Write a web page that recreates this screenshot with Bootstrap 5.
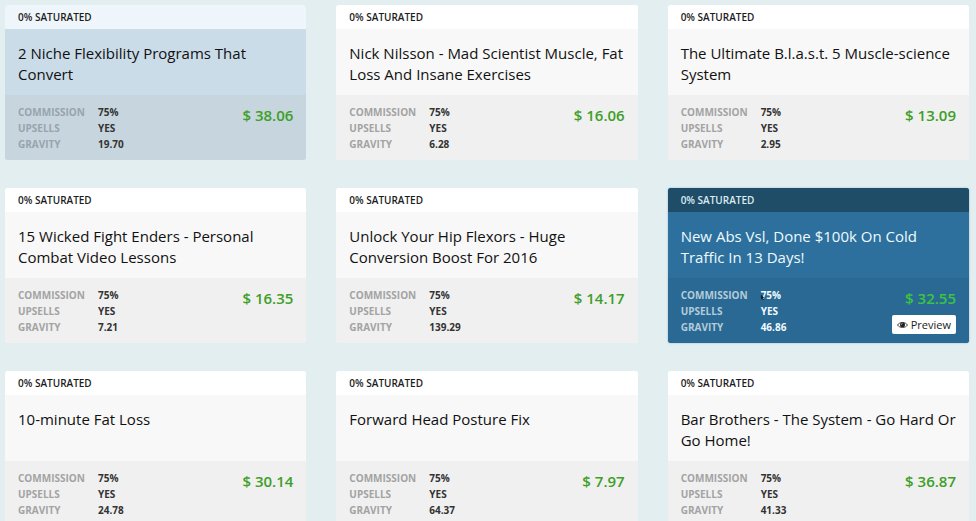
<!DOCTYPE html>
<html lang="en">
<head>
<meta charset="utf-8">
<meta name="viewport" content="width=device-width, initial-scale=1">
<title>Offers</title>
<link href="https://cdn.jsdelivr.net/npm/bootstrap@5.3.0/dist/css/bootstrap.min.css" rel="stylesheet">
<style>
html { scrollbar-width: none; }
body { background: #e2eef0; font-family: "Open Sans", sans-serif; color: #1c1c1c; }
.offers { padding: 5px 7px 5px 5px; --bs-gutter-x: 0; }
.offer-grid { display: grid; grid-template-columns: repeat(3, minmax(0, 1fr)); column-gap: 30px; row-gap: 28px; }
.offer { border: 0; border-radius: 3px; background: #f8f8f8; overflow: hidden; color: inherit; }
.offer .card-header { background: #fff; border: 0; padding: 5px 13px 4px; font-size: 10px; line-height: 15px; font-weight: 600; border-radius: 0; }
.offer .card-body { padding: 14px 6px 10px 13px; min-height: 66px; }
.offer .card-title { font-size: 15px; line-height: 21px; font-weight: 400; margin: 0; color: #111; }
.offer .card-footer { background: #f0f0f0; border: 0; padding: 9px 13px 8px; min-height: 65px; border-radius: 0; }
.stats { display: grid; grid-template-columns: 80px auto; font-size: 10px; line-height: 16px; font-weight: 700; }
.stats dt { color: #a3a3a3; font-weight: 700; }
.stats dd { margin: 0; color: #333; }
.price { font-size: 15px; line-height: 23px; font-weight: 600; color: #3d9f27; }
.offer-viewed { background: #cbdce9; }
.offer-viewed .card-header { background: #eff6fb; }
.offer-viewed .card-footer { background: #c7d5df; }
.offer-viewed .stats dt { color: #98a4ad; }
.offer-active { background: #2d709d; color: #eefaff; box-shadow: 0 0 2px #8eb6d0; }
.offer-active .card-header { background: #1f4d68; color: #dcebf2; }
.offer-active .card-title { color: #eefaff; }
.offer-active .card-footer { background: #2a6993; }
.offer-active .stats dt { color: #b3ccda; }
.offer-active .stats dd { color: #f0faff; }
.offer-active .price { color: #3ac53f; }
.preview { background: #fff; color: #222; border: 0; border-radius: 2px; font-size: 11px; line-height: 15px; padding: 2px 5px; margin-top: 5px; gap: 3px; }
.preview:hover { background: #f1f5f7; color: #222; }
.pointer { left: -1px; top: 7px; }
</style>
<script src="https://cdn.jsdelivr.net/npm/bootstrap@5.3.0/dist/js/bootstrap.bundle.min.js"></script>
</head>
<body>
<main class="container-fluid offers">
<div class="offer-grid">
<article class="card offer offer-viewed">
<div class="card-header">0% SATURATED</div>
<div class="card-body"><h2 class="card-title">2 Niche Flexibility Programs That Convert</h2></div>
<div class="card-footer d-flex justify-content-between">
<dl class="stats mb-0"><dt>COMMISSION</dt><dd>75%</dd><dt>UPSELLS</dt><dd>YES</dd><dt>GRAVITY</dt><dd>19.70</dd></dl>
<span class="price">$ 38.06</span></div>
</article>
<article class="card offer">
<div class="card-header">0% SATURATED</div>
<div class="card-body"><h2 class="card-title">Nick Nilsson - Mad Scientist Muscle, Fat Loss And Insane Exercises</h2></div>
<div class="card-footer d-flex justify-content-between">
<dl class="stats mb-0"><dt>COMMISSION</dt><dd>75%</dd><dt>UPSELLS</dt><dd>YES</dd><dt>GRAVITY</dt><dd>6.28</dd></dl>
<span class="price">$ 16.06</span></div>
</article>
<article class="card offer">
<div class="card-header">0% SATURATED</div>
<div class="card-body"><h2 class="card-title">The Ultimate B.l.a.s.t. 5 Muscle-science System</h2></div>
<div class="card-footer d-flex justify-content-between">
<dl class="stats mb-0"><dt>COMMISSION</dt><dd>75%</dd><dt>UPSELLS</dt><dd>YES</dd><dt>GRAVITY</dt><dd>2.95</dd></dl>
<span class="price">$ 13.09</span></div>
</article>
<article class="card offer">
<div class="card-header">0% SATURATED</div>
<div class="card-body"><h2 class="card-title">15 Wicked Fight Enders - Personal Combat Video Lessons</h2></div>
<div class="card-footer d-flex justify-content-between">
<dl class="stats mb-0"><dt>COMMISSION</dt><dd>75%</dd><dt>UPSELLS</dt><dd>YES</dd><dt>GRAVITY</dt><dd>7.21</dd></dl>
<span class="price">$ 16.35</span></div>
</article>
<article class="card offer">
<div class="card-header">0% SATURATED</div>
<div class="card-body"><h2 class="card-title">Unlock Your Hip Flexors - Huge Conversion Boost For 2016</h2></div>
<div class="card-footer d-flex justify-content-between">
<dl class="stats mb-0"><dt>COMMISSION</dt><dd>75%</dd><dt>UPSELLS</dt><dd>YES</dd><dt>GRAVITY</dt><dd>139.29</dd></dl>
<span class="price">$ 14.17</span></div>
</article>
<article class="card offer offer-active">
<div class="card-header">0% SATURATED</div>
<div class="card-body"><h2 class="card-title">New Abs Vsl, Done $100k On Cold Traffic In 13 Days!</h2></div>
<div class="card-footer d-flex justify-content-between">
<dl class="stats mb-0"><dt>COMMISSION</dt><dd class="position-relative">75%<svg class="pointer position-absolute" width="5" height="7" viewBox="0 0 6 9" aria-hidden="true"><path d="M1 1v6l1.500-1.300 1 2.300 1.200-.6-1-2.100H5.400z" fill="#111a22"/></svg></dd><dt>UPSELLS</dt><dd>YES</dd><dt>GRAVITY</dt><dd>46.86</dd></dl>
<div class="d-flex flex-column align-items-end"><span class="price">$ 32.55</span>
<button type="button" class="btn preview d-inline-flex align-items-center"><svg width="11" height="8" viewBox="0 0 22 16" aria-hidden="true"><path d="M1 8C5 1.500 17 1.500 21 8 17 14.500 5 14.500 1 8z" fill="none" stroke="#333" stroke-width="1.800"/><circle cx="11" cy="7.500" r="5" fill="#222"/><path d="M8.500 7.500A2.500 2.500 0 0 1 11 5" fill="none" stroke="#fff" stroke-width="1.200"/></svg>Preview</button></div></div>
</article>
<article class="card offer">
<div class="card-header">0% SATURATED</div>
<div class="card-body"><h2 class="card-title">10-minute Fat Loss</h2></div>
<div class="card-footer d-flex justify-content-between">
<dl class="stats mb-0"><dt>COMMISSION</dt><dd>75%</dd><dt>UPSELLS</dt><dd>YES</dd><dt>GRAVITY</dt><dd>24.78</dd></dl>
<span class="price">$ 30.14</span></div>
</article>
<article class="card offer">
<div class="card-header">0% SATURATED</div>
<div class="card-body"><h2 class="card-title">Forward Head Posture Fix</h2></div>
<div class="card-footer d-flex justify-content-between">
<dl class="stats mb-0"><dt>COMMISSION</dt><dd>75%</dd><dt>UPSELLS</dt><dd>YES</dd><dt>GRAVITY</dt><dd>64.37</dd></dl>
<span class="price">$ 7.97</span></div>
</article>
<article class="card offer">
<div class="card-header">0% SATURATED</div>
<div class="card-body"><h2 class="card-title">Bar Brothers - The System - Go Hard Or Go Home!</h2></div>
<div class="card-footer d-flex justify-content-between">
<dl class="stats mb-0"><dt>COMMISSION</dt><dd>75%</dd><dt>UPSELLS</dt><dd>YES</dd><dt>GRAVITY</dt><dd>41.33</dd></dl>
<span class="price">$ 36.87</span></div>
</article>
</div>
</main>
</body>
</html>
